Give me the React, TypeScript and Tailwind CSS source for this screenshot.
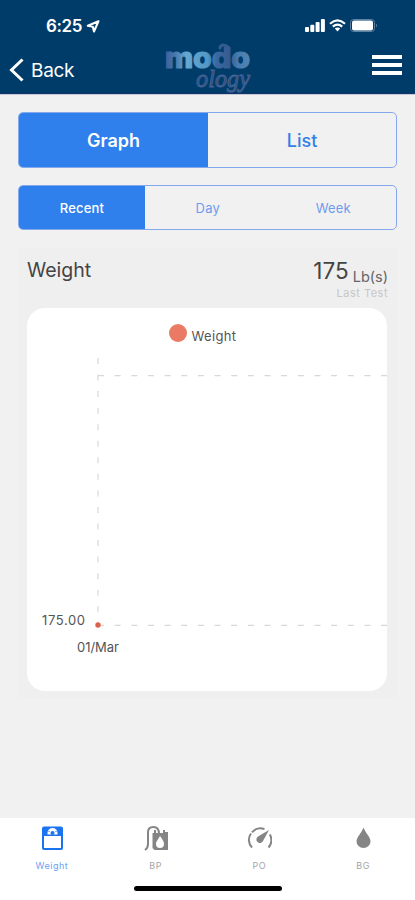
import React from 'react';

function StatusBar() {
  return (
    <div className="flex h-[46px] items-start justify-between pl-[46px] pr-[37px] pt-[16px]">
      <div className="flex items-center gap-[4px]">
        <span className="text-[17px] font-semibold leading-5 tracking-[-0.4px]">6:25</span>
        <svg width="14" height="13" viewBox="0 0 14 13" fill="none" stroke="white" strokeWidth="2.1" strokeLinejoin="round">
          <path d="M12.500 1.200L1.800 5.800L6.800 6.700L8 11.500Z" />
        </svg>
      </div>
      <div className="flex items-center gap-[4px] pt-[3px]">
        <svg width="20" height="13" viewBox="0 0 20 13" fill="white">
          <rect x="0" y="8" width="4" height="5" rx="1" />
          <rect x="5.3" y="5.7" width="4" height="7.3" rx="1" />
          <rect x="10.6" y="3" width="4" height="10" rx="1" />
          <rect x="15.9" y="0" width="4" height="13" rx="1" />
        </svg>
        <svg width="17" height="13" viewBox="0 0 17 13" fill="none" stroke="white" strokeWidth="2.2">
          <path d="M1 4.700Q8.500 -2 16 4.700" />
          <path d="M3.800 7.700Q8.500 3.700 13.200 7.700" />
          <path d="M5.800 9.500Q8.500 7.500 11.200 9.500L8.500 12.400Z" fill="white" stroke="none" />
        </svg>
        <svg width="28" height="13" viewBox="0 0 28 13">
          <rect x="0.5" y="0.5" width="24" height="12" rx="3" fill="none" stroke="#5d82a4" />
          <rect x="2" y="1.5" width="21" height="10" rx="2" fill="white" />
          <path d="M26 4.500Q28 6.500 26 8.500Z" fill="#5d82a4" />
        </svg>
      </div>
    </div>
  );
}

function Logo() {
  return (
    <svg className="absolute left-[160px] top-[38px]" width="100" height="66" viewBox="0 0 100 66">
      <defs>
        <linearGradient id="brand" x1="0" x2="1">
          <stop offset="0" stopColor="#3f5e9b" />
          <stop offset="0.12" stopColor="#4678ae" />
          <stop offset="0.25" stopColor="#66a8d2" />
          <stop offset="0.5" stopColor="#5298c6" />
          <stop offset="0.6" stopColor="#3b699f" />
          <stop offset="0.76" stopColor="#365b92" />
          <stop offset="0.86" stopColor="#467caf" />
          <stop offset="1" stopColor="#5085b5" />
        </linearGradient>
      </defs>
      <text x="5" y="29.5" textLength="85" lengthAdjust="spacingAndGlyphs" fontFamily="Inter" fontSize="28" fontWeight="800" fill="url(#brand)" stroke="url(#brand)" strokeWidth="1.2" strokeLinejoin="round">modo</text>
      <path d="M69 11C67 6 60 6 60 10" fill="none" stroke="#365b92" strokeWidth="3" strokeLinecap="round" />
      <text x="36" y="49" textLength="54" lengthAdjust="spacingAndGlyphs" fontFamily="Liberation Serif" fontSize="26" fontStyle="italic" fill="#284f82" stroke="#456395" strokeWidth="0.9">ology</text>
    </svg>
  );
}

function Header() {
  return (
    <header className="relative h-[95px] shrink-0 border-b border-[#c9c9d3] bg-[#003c69] text-white shadow-[inset_0_-1px_0_#12346a]">
      <StatusBar />
      <div className="flex items-start justify-between pl-[9px] pr-[13px]">
        <div className="flex items-center gap-[7px] pt-[12px]">
          <svg width="15" height="24" viewBox="0 0 15 24" fill="none" stroke="white" strokeWidth="3">
            <path d="M13.500 1.500L2.500 12L13.500 22.500" />
          </svg>
          <span className="relative top-px text-[19px] leading-6 tracking-[-0.3px]">Back</span>
        </div>
        <div className="mt-[9px] flex flex-col gap-[4px]">
          <i className="block h-1 w-[30px] bg-white shadow-[0_0_1px_#1b2170]" />
          <i className="block h-1 w-[30px] bg-white shadow-[0_0_1px_#1b2170]" />
          <i className="block h-1 w-[30px] bg-white shadow-[0_0_1px_#1b2170]" />
        </div>
      </div>
      <Logo />
    </header>
  );
}

function Chart() {
  return (
    <div className="ml-[9px] h-[383px] w-[360px] overflow-hidden rounded-[18px] bg-white">
      <svg width="360" height="383" viewBox="0 0 360 383" fontFamily="Inter" fontSize="13" fill="#555">
        <circle cx="151" cy="25" r="9" fill="#ea7a63" />
        <text x="164.500" y="32.500" textLength="44.500">Weight</text>
        <g stroke="#d8d8d8" strokeWidth="1.2" fill="none">
          <path d="M71 50V317" strokeDasharray="6 10.550" />
          <path d="M71 67.700H360" strokeDasharray="6 10.650" />
          <path d="M71 317.400H360" strokeDasharray="6 10.650" />
        </g>
        <circle cx="71" cy="317" r="2.700" fill="#dc604c" />
        <text x="15" y="317" textLength="43">175.00</text>
        <text x="50" y="343.500" textLength="42">01/Mar</text>
      </svg>
    </div>
  );
}

function Tab({ label, active, children }: { label: string; active?: boolean; children: React.ReactNode }) {
  return (
    <div className={`flex w-[103.75px] flex-col items-center ${active ? 'text-[#1a73f0]' : 'text-[#858585]'}`}>
      <svg width="26" height="28" viewBox="0 0 26 28">{children}</svg>
      <span className={`mt-[7px] text-[9px] leading-3 tracking-[0.5px] ${active ? 'text-[#6ca2f7]' : 'text-[#a5a5a5]'}`}>{label}</span>
    </div>
  );
}

export default function App() {
  return (
    <div className="flex h-[900px] w-[415px] flex-col overflow-hidden bg-[#f1f1f1] font-['Inter',sans-serif]">
      <Header />
      <main className="flex-1 px-[18px] pt-[17px]">
        <div className="flex h-[56px] overflow-hidden rounded-[5px] border border-[#84a9ed] text-[18px]">
          <div className="flex w-[189px] items-center justify-center bg-[#2f80ed] font-semibold text-white">Graph</div>
          <div className="flex flex-1 items-center justify-center font-medium text-[#3480e6]">List</div>
        </div>
        <div className="mt-[17px] flex h-[45px] overflow-hidden rounded-[5px] border border-[#84a9ed] text-[13px] tracking-[0.2px]">
          <div className="flex w-[126px] items-center justify-center bg-[#2f80ed] pt-[2px] font-medium text-white">Recent</div>
          <div className="flex flex-1 items-center justify-center pt-[2px] text-[#6f9bed]">Day</div>
          <div className="flex flex-1 items-center justify-center pt-[2px] text-[#6f9bed]">Week</div>
        </div>
        <section className="mt-[18px] h-[450px] rounded-[4px] bg-[#efefef]">
          <div className="flex h-[60px] justify-between px-[9px] pt-[10px] text-[#444]">
            <h1 className="text-[19.5px] leading-6">Weight</h1>
            <div className="text-right">
              <div className="flex h-[29px] items-baseline gap-[4px] leading-[26px]">
                <span className="text-[22.5px]">175</span><span className="relative top-[3px] text-[14.5px] text-[#666]">Lb(s)</span>
              </div>
              <div className="text-[11px] leading-3 tracking-[0.5px] text-[#c7c7c7]">Last Test</div>
            </div>
          </div>
          <Chart />
        </section>
      </main>
      <nav className="h-[82px] shrink-0 bg-white pt-[7px]">
        <div className="flex">
          <Tab label="Weight" active>
            <path fill="currentColor" fillRule="evenodd" d="M5 1.500H22Q24 1.500 24 3.500V23Q24 25 22 25H5Q3 25 3 23V3.500Q3 1.500 5 1.500ZM5 11V23H22V11Z" />
            <path d="M8.500 8A5 5 0 0 1 18.500 8V9.500H8.500Z" fill="white" />
            <path d="M9.500 7L10.500 6M16.500 6L17.500 7" stroke="currentColor" strokeWidth="1" />
            <circle cx="13.500" cy="8" r="2" fill="currentColor" />
          </Tab>
          <Tab label="BP">
            <path d="M2 25Q5 23 5 19V7Q5 2 10.500 2Q16 2 16 9" fill="none" stroke="currentColor" strokeWidth="2" />
            <path d="M9.500 8H11V5H13V8H20V5H22V7H25V25H11.500L9.500 23Z" fill="currentColor" />
            <path d="M17 11C15 15 13 16 13 19A4 4 0 0 0 21 19C21 16 19 14 17 11Z" fill="white" />
          </Tab>
          <Tab label="PO">
            <g fill="none" stroke="currentColor" strokeWidth="2">
              <path d="M6 22.500A10.800 10.800 0 0 1 5 8.500M6 7.300A10.800 10.800 0 0 1 18.500 4.200" />
              <path d="M23.800 9.500A10.800 10.800 0 0 1 22.500 22.500" />
            </g>
            <path d="M23 5L12 11.500A3.500 3.500 0 1 0 17 16Z" fill="currentColor" />
          </Tab>
          <Tab label="BG">
            <path d="M13.500 2.500C11.500 8 6.500 12 6.500 16.500A7 6.500 0 0 0 20.500 16.500C20.500 12 15.500 8 13.500 2.500Z" fill="currentColor" />
          </Tab>
        </div>
        <div className="mx-auto mt-[14px] h-[5px] w-[148px] rounded-full bg-black" />
      </nav>
    </div>
  );
}
